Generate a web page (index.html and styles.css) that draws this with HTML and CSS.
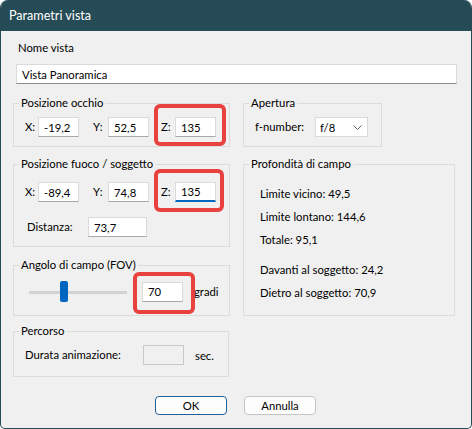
FILE: index.html
```html
<!DOCTYPE html>
<html lang="it">
<head>
  <meta charset="UTF-8" />
  <title>Parametri vista</title>
  <link rel="stylesheet" href="styles.css">
</head>
<body>
  <div class="window">
    <div class="titlebar">Parametri vista</div>

    <div class="content">
      <div class="name-label">Nome vista</div>
      <input type="text" class="field wide" value="Vista Panoramica">

      <div class="row row-top">
        <fieldset class="group g-left">
          <legend>Posizione occhio</legend>
          <div class="coords">
            <label class="lbl lx">X:</label><input type="text" class="field num" value="-19,2">
            <label class="lbl ly">Y:</label><input type="text" class="field num" value="52,5">
            <span class="hl">
              <label class="lbl lz">Z:</label><input type="text" class="field num" value="135">
            </span>
          </div>
        </fieldset>

        <fieldset class="group g-aperture">
          <legend>Apertura</legend>
          <div class="coords">
            <label class="lbl lf">f-number:</label>
            <div class="select">
              <span>f/8</span>
              <svg width="9" height="5" viewBox="0 0 9 5"><polyline points="0.5,0.5 4.5,4.5 8.5,0.5" fill="none" stroke="#606060" stroke-width="1"/></svg>
            </div>
          </div>
        </fieldset>
      </div>

      <div class="row row-mid">
        <div class="col-left">
          <fieldset class="group g-left g-focus">
            <legend>Posizione fuoco / soggetto</legend>
            <div class="coords">
              <label class="lbl lx">X:</label><input type="text" class="field num" value="-89,4">
              <label class="lbl ly">Y:</label><input type="text" class="field num" value="74,8">
              <span class="hl">
                <label class="lbl lz">Z:</label><input type="text" class="field num focused" value="135">
              </span>
            </div>
            <div class="coords dist">
              <label class="lbl ld">Distanza:</label><input type="text" class="field dnum" value="73,7">
            </div>
          </fieldset>

          <fieldset class="group g-left g-fov">
            <legend>Angolo di campo (FOV)</legend>
            <div class="coords">
              <div class="slider"><div class="thumb" style="margin-left: 31px"></div></div>
              <span class="hl hl-fov">
                <input type="text" class="field num" value="70">
              </span>
              <span class="unit">gradi</span>
            </div>
          </fieldset>
        </div>

        <fieldset class="group g-dof">
          <legend>Profondità di campo</legend>
          <p>Limite vicino: 49,5</p>
          <p>Limite lontano: 144,6</p>
          <p>Totale: 95,1</p>
          <p class="gap">Davanti al soggetto: 24,2</p>
          <p>Dietro al soggetto: 70,9</p>
        </fieldset>
      </div>

      <fieldset class="group g-left g-path">
        <legend>Percorso</legend>
        <div class="coords">
          <label class="lbl lp">Durata animazione:</label>
          <input type="text" class="field num" disabled>
          <span class="unit">sec.</span>
        </div>
      </fieldset>

      <div class="buttons">
        <button class="btn default">OK</button>
        <button class="btn">Annulla</button>
      </div>
    </div>
  </div>
</body>
</html>
```

FILE: styles.css
```css
body {
  margin: 0;
  background: #ffffff;
  font-family: Lato, "Noto Sans", sans-serif;
  font-size: 11.3px;
  color: #000;
}
.window {
  width: 472px;
  height: 429px;
  box-sizing: border-box;
  background: #f0f0f0;
  border: 1px solid #254b56;
  border-top: none;
  border-radius: 8px 8px 5px 5px;
  overflow: hidden;
}
.titlebar {
  height: 31px;
  background: #254b56;
  color: #fff;
  font-size: 12.6px;
  line-height: 32px;
  padding-left: 8px;
}
.content {
  padding: 9px 16px 0 12px;
}
.name-label {
  line-height: 16px;
  padding-left: 5px;
}
.field {
  box-sizing: border-box;
  height: 20px;
  margin: 0;
  padding: 0 5px;
  font: inherit;
  color: #000;
  background: #fff;
  border: 1px solid #dadada;
  border-bottom-color: #a8a8a8;
  border-radius: 0;
  outline: none;
}
.wide {
  display: block;
  width: 441px;
  margin: 8px 0 0 3px;
  border-bottom-color: #8c8c8c;
}
.row {
  display: flex;
  align-items: flex-start;
  gap: 13px;
}
.row-top {
  margin-top: 11px;
}
.row-mid {
  margin-top: 9px;
  align-items: stretch;
}
.col-left {
  display: flex;
  flex-direction: column;
  gap: 10px;
}
.group {
  box-sizing: border-box;
  min-width: 0;
  margin: 0;
  border: 1px solid #dcdcdc;
  padding: 6px 10px 9px 10px;
}
.group legend {
  line-height: 16px;
  padding: 0 2px;
  margin-left: -5px;
}
.g-left {
  width: 217px;
}
.g-aperture {
  width: 139px;
  padding-left: 11px;
}
.g-aperture legend {
  margin-left: -6px;
}
.coords {
  display: flex;
  align-items: center;
}
.lbl {
  line-height: 16px;
}
.lx { width: 13px; margin-left: 1px; }
.ly { width: 15px; margin-left: 14px; }
.lz { width: 14px; }
.num {
  width: 41px;
}
.coords .hl {
  margin-left: 12px;
}
.hl {
  position: relative;
  display: flex;
  align-items: center;
}
.hl::after {
  content: "";
  position: absolute;
  top: -13px;
  right: -10px;
  bottom: -9px;
  left: -7px;
  border: 4px solid #e8413e;
  border-radius: 6px;
}
.g-focus .hl::after {
  right: -8px;
  bottom: -10px;
}
.focused {
  border-bottom: 2px solid #0067c0;
}
.lf {
  width: 60px;
}
.select {
  box-sizing: border-box;
  width: 53px;
  height: 20px;
  background: #fff;
  border: 1px solid #dadada;
  display: flex;
  align-items: center;
  justify-content: space-between;
  padding: 0 5px 0 4px;
}
.g-focus {
  padding-top: 10px;
}
.dist {
  margin-top: 15px;
}
.ld {
  width: 61px;
  margin-left: 3px;
}
.dnum {
  width: 59px;
}
.g-fov {
  padding-top: 8px;
  padding-bottom: 13px;
}
.slider {
  width: 98px;
  height: 21px;
  margin-left: 5px;
  display: flex;
  align-items: center;
  background: linear-gradient(#d3d3d3, #d3d3d3) no-repeat 0 10px / 100% 3px;
}
.thumb {
  width: 8px;
  height: 21px;
  background: #0067c0;
  border-radius: 2px;
}
.coords .hl-fov {
  margin-left: 15px;
}
.hl-fov::after {
  top: -10px;
  right: -12px;
  bottom: -12px;
  left: -9px;
}
.unit {
  margin-left: 11px;
}
.g-dof {
  width: 212px;
  padding: 10px 10px 0 16px;
}
.g-dof legend {
  margin-left: -11px;
}
.g-dof p {
  margin: 0;
  line-height: 23px;
}
.g-dof p.gap {
  margin-top: 7px;
}
.g-path {
  margin-top: 7px;
  width: 216px;
  padding-bottom: 11px;
}
.lp {
  width: 118px;
  margin-left: 1px;
}
.field:disabled {
  background: #f0f0f0;
  border-color: #c8c8c8;
}
.buttons {
  display: flex;
  justify-content: center;
  gap: 17px;
  margin-top: 19px;
  padding-left: 3px;
}
.btn {
  width: 72px;
  height: 19px;
  padding: 0;
  font: inherit;
  line-height: 17px;
  color: #000;
  background: #fdfdfd;
  border: 1px solid #c4c4c4;
  border-radius: 4px;
}
.btn.default {
  border-color: #1f5f9a;
}
```
